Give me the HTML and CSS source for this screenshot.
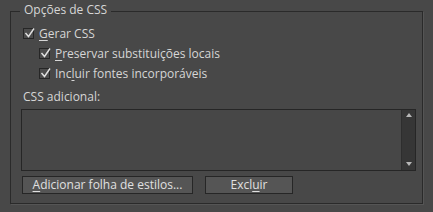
FILE: index.html
```html
<!DOCTYPE html>
<html lang="pt">
<head>
  <meta charset="UTF-8" />
  <title>Opções de CSS</title>
  <link rel="stylesheet" href="styles.css">
</head>
<body>
  <fieldset class="group">
    <legend>Opções de CSS</legend>

    <label class="opt">
      <span class="box"><svg viewBox="0 0 11 11"><path d="M1.5 5 L4.5 8.5 L10 0.5" /></svg></span>
      <span><u>G</u>erar CSS</span>
    </label>
    <label class="opt sub">
      <span class="box"><svg viewBox="0 0 11 11"><path d="M1.5 5 L4.5 8.5 L10 0.5" /></svg></span>
      <span><u>P</u>reservar substituições locais</span>
    </label>
    <label class="opt sub">
      <span class="box"><svg viewBox="0 0 11 11"><path d="M1.5 5 L4.5 8.5 L10 0.5" /></svg></span>
      <span>Inc<u>l</u>uir fontes incorporáveis</span>
    </label>

    <div class="field-label">CSS adicional:</div>
    <div class="textbox">
      <div class="text-area"></div>
      <div class="scroll">
        <span class="arrow up"></span>
        <span class="arrow down"></span>
      </div>
    </div>

    <div class="actions">
      <button class="btn wide"><u>A</u>dicionar folha de estilos...</button>
      <button class="btn">Excl<u>u</u>ir</button>
    </div>
  </fieldset>
</body>
</html>
```

FILE: styles.css
```css
* {
  box-sizing: border-box;
}

body {
  margin: 0;
  background: #484848;
  color: #d6d6d6;
  font-family: "Open Sans", "Noto Sans", sans-serif;
  font-size: 12px;
  height: 212px;
  overflow: hidden;
}

u {
  text-decoration-thickness: 1px;
  text-underline-offset: 2px;
}

.group {
  margin: 5px 0 0 10px;
  width: 413px;
  padding: 6px 0 9px 12px;
  border: 1px solid #2a2a2a;
  box-shadow: 1px 1px 0 #555;
}

.group legend {
  margin-left: -3px;
  padding: 0 4px;
  line-height: 12px;
  position: relative;
  top: -1px;
}

.opt {
  display: flex;
  align-items: center;
  gap: 5px;
  height: 20px;
}

.opt.sub {
  padding-left: 16px;
}

.box {
  position: relative;
  width: 11px;
  height: 11px;
  border: 1px solid #262626;
  background: #4c4c4c;
}

.box svg {
  position: absolute;
  left: 0;
  top: -1px;
  width: 11px;
  height: 11px;
  overflow: visible;
  fill: none;
  stroke: #e0e0e0;
  stroke-width: 1.4;
}

.field-label {
  margin-top: 6px;
  height: 16px;
  line-height: 16px;
}

.textbox {
  margin: 4px 0 0 -2px;
  width: 395px;
  height: 62px;
  border: 1px solid #262626;
  background: #474747;
  display: flex;
}

.text-area {
  flex: 1;
}

.scroll {
  width: 14px;
  background: #363636;
  border-left: 1px solid #2e2e2e;
  display: flex;
  flex-direction: column;
  justify-content: space-between;
  align-items: center;
  padding: 3px 0 4px;
}

.arrow {
  width: 0;
  height: 0;
  border-left: 3px solid transparent;
  border-right: 3px solid transparent;
}

.arrow.up {
  border-bottom: 4px solid #b8b8b8;
}

.arrow.down {
  border-top: 4px solid #b8b8b8;
}

.actions {
  display: flex;
  gap: 12px;
  margin: 5px 0 0 -1px;
}

.btn {
  height: 18px;
  width: 88px;
  padding: 0;
  border: 1px solid #262626;
  background: #555555;
  color: #e0e0e0;
  font-family: inherit;
  font-size: 12px;
  line-height: 16px;
}

.btn.wide {
  width: 171px;
}
```
